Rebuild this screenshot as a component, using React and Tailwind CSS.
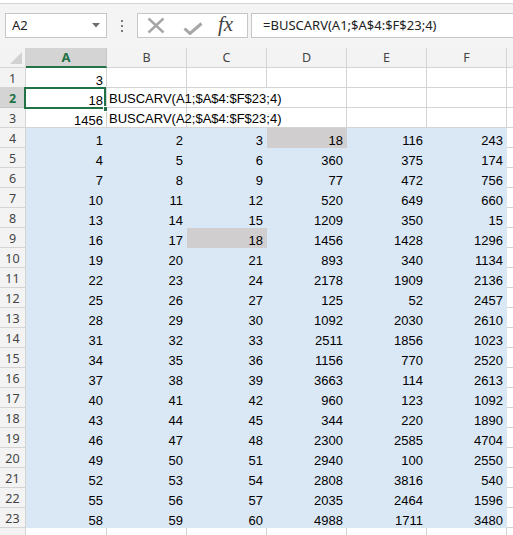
import React from "react";

const data = [
  [1, 2, 3, 18, 116, 243],
  [4, 5, 6, 360, 375, 174],
  [7, 8, 9, 77, 472, 756],
  [10, 11, 12, 520, 649, 660],
  [13, 14, 15, 1209, 350, 15],
  [16, 17, 18, 1456, 1428, 1296],
  [19, 20, 21, 893, 340, 1134],
  [22, 23, 24, 2178, 1909, 2136],
  [25, 26, 27, 125, 52, 2457],
  [28, 29, 30, 1092, 2030, 2610],
  [31, 32, 33, 2511, 1856, 1023],
  [34, 35, 36, 1156, 770, 2520],
  [37, 38, 39, 3663, 114, 2613],
  [40, 41, 42, 960, 123, 1092],
  [43, 44, 45, 344, 220, 1890],
  [46, 47, 48, 2300, 2585, 4704],
  [49, 50, 51, 2940, 100, 2550],
  [52, 53, 54, 2808, 3816, 540],
  [55, 56, 57, 2035, 2464, 1596],
  [58, 59, 60, 4988, 1711, 3480],
];

const cellFont = { fontFamily: '"Liberation Sans", Arial, sans-serif' };
const uiFont = { fontFamily: '"Noto Sans", "Open Sans", sans-serif' };

function RowHead({ n, active }) {
  return (
    <div
      className={
        active
          ? "h-[20px] border-r border-b border-[#c6c6c6] bg-[#d4d4d4] flex items-center justify-center pt-[3px] text-[12.5px] font-bold text-[#217346]"
          : "h-[20px] border-r border-b border-[#d4d4d4] bg-[#f3f3f3] flex items-center justify-center pt-[3px] text-[12.5px] text-[#444]"
      }
      style={uiFont}
    >
      {n}
    </div>
  );
}

function Plain({ children }) {
  return (
    <div
      className="h-[20px] border-r border-b border-[#d4d4d4] bg-white flex items-end justify-end pr-[3px] text-[13px] leading-none text-black whitespace-nowrap"
      style={cellFont}
    >
      {children}
    </div>
  );
}

function Sel({ children, grey }) {
  return (
    <div
      className={
        grey
          ? "h-[20px] border-r border-b border-[#d0cece] bg-[#d0cece] flex items-end justify-end pr-[3px] text-[13px] leading-none text-black"
          : "h-[20px] border-r border-b border-[#dae7f5] bg-[#dae7f5] flex items-end justify-end pr-[3px] text-[13px] leading-none text-black"
      }
      style={cellFont}
    >
      {children}
    </div>
  );
}

function ColHead({ label, active }) {
  return (
    <div
      className={
        active
          ? "h-[20px] border-r border-[#c6c6c6] border-b-2 border-b-[#217346] bg-[#d4d4d4] flex items-center justify-center pt-[1px] text-[13px] font-bold text-[#217346]"
          : "h-[20px] border-r border-b border-[#d4d4d4] bg-[#f3f3f3] flex items-center justify-center pt-[1px] text-[12.5px] text-[#444]"
      }
      style={uiFont}
    >
      {label}
    </div>
  );
}

function Overflow({ text }) {
  return (
    <div className="relative">
      <Plain />
      <div
        className="absolute left-[2px] bottom-[3px] text-[13px] leading-none whitespace-nowrap text-black"
        style={cellFont}
      >
        {text}
      </div>
    </div>
  );
}

export default function App() {
  return (
    <div className="w-[513px] h-[535px] overflow-hidden bg-white flex flex-col">
      {/* Formula bar */}
      <div className="h-[3px] bg-white shrink-0" />
      <div className="h-[45px] shrink-0 border-t border-[#d5d5d5] bg-[#f4f4f4] flex items-start pt-[9px] pl-[5px]">
        <div
          className="w-[102px] h-[25px] bg-white border border-[#c6c6c6] flex items-center justify-between pl-[6px] pr-[6px]"
          style={uiFont}
        >
          <span className="text-[13px] text-[#222]">A2</span>
          <svg width="8" height="5" viewBox="0 0 8 5">
            <polygon points="0,0 8,0 4,4.5" fill="#6f6f6f" />
          </svg>
        </div>
        <div className="w-[30px] h-[25px] flex flex-col items-center justify-center gap-[3px]">
          <div className="w-[2px] h-[2px] bg-[#7a7a7a]" />
          <div className="w-[2px] h-[2px] bg-[#7a7a7a]" />
          <div className="w-[2px] h-[2px] bg-[#7a7a7a]" />
        </div>
        <div className="w-[111px] h-[25px] bg-white border border-[#c6c6c6] flex items-center pl-[9px]">
          <svg width="18" height="17" viewBox="0 0 18 17" className="mr-[18px]">
            <path d="M1.5 1.5 L16.5 15.5 M16.5 1.5 L1.5 15.5" stroke="#a6a6a6" strokeWidth="2.4" fill="none" />
          </svg>
          <svg width="20" height="13" viewBox="0 0 20 13" className="mr-[15px] mt-[6px]">
            <path d="M1.5 6.5 L7 11.5 L18.5 1.5" stroke="#a6a6a6" strokeWidth="3" fill="none" />
          </svg>
          <span
            className="text-[21px] italic text-[#444] leading-none -mt-[3px]"
            style={{ fontFamily: '"Liberation Serif", "Times New Roman", serif' }}
          >
            fx
          </span>
        </div>
        <div className="ml-[3px] flex-1 h-[25px] bg-white border border-r-0 border-[#c6c6c6] flex items-center pl-[11px]" style={uiFont}>
          <span className="text-[13px] text-[#222] whitespace-nowrap">=BUSCARV(A1;$A$4:$F$23;4)</span>
        </div>
      </div>

      {/* Sheet */}
      <div className="grid grid-cols-[26px_81px_80px_80px_80px_80px_80px_80px] shrink-0">
        {/* header row */}
        <div className="h-[20px] border-r border-b border-[#d4d4d4] bg-[#f3f3f3] flex items-end justify-end pr-[3px] pb-[3px]">
          <svg width="12" height="12" viewBox="0 0 12 12">
            <polygon points="12,0 12,12 0,12" fill="#d2d2d2" />
          </svg>
        </div>
        <ColHead label="A" active />
        <ColHead label="B" />
        <ColHead label="C" />
        <ColHead label="D" />
        <ColHead label="E" />
        <ColHead label="F" />
        <ColHead label="" />

        {/* row 1 */}
        <RowHead n={1} />
        <Plain>3</Plain>
        <Plain />
        <Plain />
        <Plain />
        <Plain />
        <Plain />
        <Plain />

        {/* row 2 */}
        <RowHead n={2} active />
        <div className="relative">
          <Plain>18</Plain>
          <div className="absolute -left-[2px] -top-[1px] w-[82px] h-[22px] border-2 border-[#217346] pointer-events-none" />
          <div className="absolute left-[77px] top-[18px] w-[6px] h-[6px] bg-[#217346] border border-white" />
        </div>
        <Overflow text="BUSCARV(A1;$A$4:$F$23;4)" />
        <div className="h-[20px] border-b border-[#d4d4d4]" />
        <div className="h-[20px] border-r border-b border-[#d4d4d4]" />
        <Plain />
        <Plain />
        <Plain />

        {/* row 3 */}
        <RowHead n={3} />
        <Plain>1456</Plain>
        <Overflow text="BUSCARV(A2;$A$4:$F$23;4)" />
        <div className="h-[20px] border-b border-[#d4d4d4]" />
        <div className="h-[20px] border-r border-b border-[#d4d4d4]" />
        <Plain />
        <Plain />
        <Plain />

        {/* rows 4-23 */}
        {data.map((row, i) => {
          const r = i + 4;
          return (
            <React.Fragment key={r}>
              <RowHead n={r} />
              {row.map((v, j) => (
                <Sel key={j} grey={(r === 4 && j === 3) || (r === 9 && j === 2)}>
                  {v}
                </Sel>
              ))}
              <Plain />
            </React.Fragment>
          );
        })}

        {/* row 24 (partially visible) */}
        <RowHead n="" />
        <Plain />
        <Plain />
        <Plain />
        <Plain />
        <Plain />
        <Plain />
        <Plain />
      </div>
    </div>
  );
}
